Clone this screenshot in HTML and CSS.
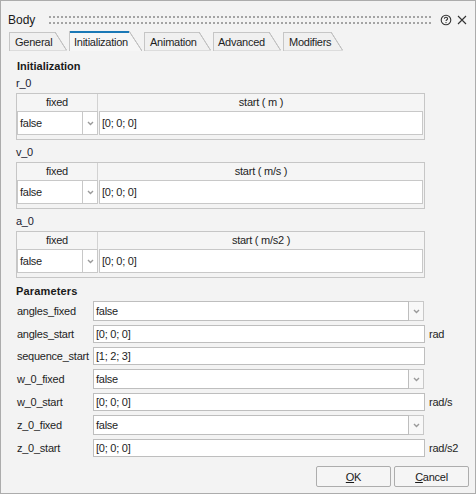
FILE: index.html
```html
<!DOCTYPE html>
<html>
<head>
<meta charset="utf-8">
<link rel="stylesheet" href="styles.css">
</head>
<body>
<div class="window">
  <header class="titlebar">
    <span class="title">Body</span>
    <span class="grip"></span>
    <svg class="help" width="12" height="12" viewBox="0 0 12 12"><circle cx="6" cy="6" r="4.8" fill="none" stroke="#333" stroke-width="1.1"/><path d="M4.4 4.8C4.4 3.8 5.1 3.3 6 3.3C6.9 3.3 7.6 3.9 7.6 4.7C7.6 5.7 6 5.8 6 7.1" fill="none" stroke="#333" stroke-width="1.1"/><circle cx="6" cy="8.6" r="0.7" fill="#333"/></svg>
    <svg class="close" width="10" height="10" viewBox="0 0 10 10"><path d="M1 1L9 9M9 1L1 9" stroke="#333" stroke-width="1.1"/></svg>
  </header>
  <nav class="tabs">
    <span class="tab tab-general">General</span>
    <span class="tab tab-init active">Initialization</span>
    <span class="tab tab-anim">Animation</span>
    <span class="tab tab-adv">Advanced</span>
    <span class="tab tab-mod">Modifiers</span>
  </nav>
  <main class="content">
    <div class="heading">Initialization</div>

    <div class="var-label">r_0</div>
    <div class="vtable">
      <div class="vhead"><span class="vh-fixed">fixed</span><span class="vh-start">start ( m )</span></div>
      <div class="vrow">
        <span class="cell-bool">false</span>
        <span class="cell-arrow"><svg width="7" height="5" viewBox="0 0 7 5"><path d="M1 1L3.5 3.5L6 1" fill="none" stroke="#9a9a9a" stroke-width="1.4"/></svg></span>
        <span class="cell-value">[0; 0; 0]</span>
      </div>
    </div>

    <div class="var-label">v_0</div>
    <div class="vtable">
      <div class="vhead"><span class="vh-fixed">fixed</span><span class="vh-start">start ( m/s )</span></div>
      <div class="vrow">
        <span class="cell-bool">false</span>
        <span class="cell-arrow"><svg width="7" height="5" viewBox="0 0 7 5"><path d="M1 1L3.5 3.5L6 1" fill="none" stroke="#9a9a9a" stroke-width="1.4"/></svg></span>
        <span class="cell-value">[0; 0; 0]</span>
      </div>
    </div>

    <div class="var-label">a_0</div>
    <div class="vtable">
      <div class="vhead"><span class="vh-fixed">fixed</span><span class="vh-start">start ( m/s2 )</span></div>
      <div class="vrow">
        <span class="cell-bool">false</span>
        <span class="cell-arrow"><svg width="7" height="5" viewBox="0 0 7 5"><path d="M1 1L3.5 3.5L6 1" fill="none" stroke="#9a9a9a" stroke-width="1.4"/></svg></span>
        <span class="cell-value">[0; 0; 0]</span>
      </div>
    </div>

    <div class="heading heading-params">Parameters</div>
    <div class="params">
      <span class="plabel">angles_fixed</span>
      <div class="select"><span class="sel-box">false</span><span class="sel-arrow"><svg width="7" height="5" viewBox="0 0 7 5"><path d="M1 1L3.5 3.5L6 1" fill="none" stroke="#9a9a9a" stroke-width="1.4"/></svg></span></div>
      <span class="unit"></span>

      <span class="plabel">angles_start</span>
      <span class="input">[0; 0; 0]</span>
      <span class="unit">rad</span>

      <span class="plabel">sequence_start</span>
      <span class="input">[1; 2; 3]</span>
      <span class="unit"></span>

      <span class="plabel">w_0_fixed</span>
      <div class="select"><span class="sel-box">false</span><span class="sel-arrow"><svg width="7" height="5" viewBox="0 0 7 5"><path d="M1 1L3.5 3.5L6 1" fill="none" stroke="#9a9a9a" stroke-width="1.4"/></svg></span></div>
      <span class="unit"></span>

      <span class="plabel">w_0_start</span>
      <span class="input">[0; 0; 0]</span>
      <span class="unit">rad/s</span>

      <span class="plabel">z_0_fixed</span>
      <div class="select"><span class="sel-box">false</span><span class="sel-arrow"><svg width="7" height="5" viewBox="0 0 7 5"><path d="M1 1L3.5 3.5L6 1" fill="none" stroke="#9a9a9a" stroke-width="1.4"/></svg></span></div>
      <span class="unit"></span>

      <span class="plabel">z_0_start</span>
      <span class="input">[0; 0; 0]</span>
      <span class="unit">rad/s2</span>
    </div>

    <div class="buttons">
      <button class="btn"><u>O</u>K</button>
      <button class="btn"><u>C</u>ancel</button>
    </div>
  </main>
</div>
</body>
</html>
```
FILE: styles.css
```css
html, body {
  margin: 0;
  padding: 0;
}
body {
  width: 476px;
  height: 494px;
  background: #f3f3f3;
  font-family: "Liberation Sans", Arial, sans-serif;
  font-size: 11px;
  letter-spacing: -0.25px;
  color: #1e1e1e;
  overflow: hidden;
}
.window {
  box-sizing: border-box;
  width: 476px;
  height: 494px;
  border: 1px solid #acacac;
  background: #f3f3f3;
  overflow: hidden;
}

/* title bar */
.titlebar {
  box-sizing: border-box;
  height: 30px;
  padding: 7px 8px 0 7px;
  display: flex;
  align-items: center;
}
.title {
  font-size: 12px;
  letter-spacing: 0;
  color: #1a1a1a;
}
.grip {
  flex: 1;
  height: 8px;
  margin-left: 14px;
  background:
    linear-gradient(90deg, #a4a4a4 50%, transparent 50%) 0 0 / 4px 2px repeat-x,
    linear-gradient(90deg, #a4a4a4 50%, transparent 50%) 0 6px / 4px 2px repeat-x;
}
.help {
  margin-left: 9px;
  display: block;
}
.close {
  margin-left: 5px;
  display: block;
}

/* tabs */
.tabs {
  height: 20px;
  display: flex;
  align-items: flex-end;
  gap: 2px;
  padding-left: 8px;
}
.tab {
  box-sizing: border-box;
  height: 19px;
  padding: 1px 0 0 4px;
  line-height: 18px;
  border-left: 1px solid #c6c6c6;
  color: #1e1e1e;
  white-space: nowrap;
  background:
    linear-gradient(#c6c6c6, #c6c6c6) 0 0 / calc(100% - 12px) 1px no-repeat,
    linear-gradient(#dcdcdc, #dcdcdc) 0 100% / 100% 1px no-repeat,
    linear-gradient(to top right, #f0f0f0 calc(50% - 0.8px), #c2c2c2 calc(50% - 0.3px), #c2c2c2 calc(50% + 0.3px), transparent calc(50% + 0.8px)) 100% 0 / 12px 100% no-repeat,
    linear-gradient(#f0f0f0, #f0f0f0) 0 0 / calc(100% - 12px) 100% no-repeat;
}
.tab.active {
  height: 20px;
  padding-top: 2px;
  background:
    linear-gradient(#1a78b6, #1a78b6) 0 0 / calc(100% - 13px) 2px no-repeat,
    linear-gradient(to top right, #f6f6f6 calc(50% - 0.8px), #c2c2c2 calc(50% - 0.3px), #c2c2c2 calc(50% + 0.3px), transparent calc(50% + 0.8px)) 100% 0 / 13px 100% no-repeat,
    linear-gradient(#f6f6f6, #f6f6f6) 0 0 / calc(100% - 13px) 100% no-repeat;
}
.tab-general { width: 58px; padding-left: 5px; }
.tab-init { width: 73px; }
.tab-anim { width: 67px; padding-left: 5px; }
.tab-adv { width: 68px; }
.tab-mod { width: 60px; padding-left: 5px; }

/* content */
.content {
  padding: 7px 0 0 15px;
}
.heading {
  font-weight: bold;
  line-height: 16px;
  letter-spacing: 0;
  padding-left: 1px;
  color: #1a1a1a;
}
.heading-params {
  margin-top: 5px;
  margin-bottom: 2px;
  padding-left: 0;
  letter-spacing: 0.15px;
}
.var-label {
  line-height: 16px;
  margin: 4px 0 2px;
  color: #202030;
}
.heading + .var-label {
  margin-top: 1px;
}

.vtable {
  box-sizing: border-box;
  width: 409px;
  border: 1px solid #c6c6c6;
  background: #f3f3f3;
  padding-bottom: 4px;
}
.vhead {
  height: 17px;
  display: grid;
  grid-template-columns: 81px 1fr;
  line-height: 17px;
  text-align: center;
  background: #f5f5f5;
}
.vh-fixed {
  border-right: 1px solid #d2d2d2;
}
.vrow {
  display: grid;
  grid-template-columns: 66px 15px 1fr;
  height: 24px;
}
.vrow > span {
  box-sizing: border-box;
  height: 24px;
  border: 1px solid #c8c8c8;
  background: #fff;
  line-height: 22px;
}
.cell-bool {
  padding-left: 2px;
}
.cell-arrow {
  border-left: none !important;
  display: flex;
  align-items: center;
  justify-content: center;
}
.cell-value {
  margin: 0 1px 0 1px;
  padding-left: 2px;
}

/* parameters */
.params {
  display: grid;
  grid-template-columns: 77px 332px auto;
  row-gap: 4px;
  align-items: center;
}
.plabel {
  line-height: 16px;
  padding-left: 1px;
}
.select {
  display: flex;
  height: 20px;
  width: 331px;
}
.sel-box {
  box-sizing: border-box;
  width: 316px;
  height: 20px;
  border: 1px solid #bebebe;
  background: #fff;
  line-height: 18px;
  padding-left: 2px;
}
.sel-arrow {
  box-sizing: border-box;
  width: 15px;
  height: 20px;
  border: 1px solid #c8c8c8;
  border-left: none;
  background: #f8f8f8;
  display: flex;
  align-items: center;
  justify-content: center;
}
.input {
  box-sizing: border-box;
  width: 332px;
  height: 18px;
  border: 1px solid #bebebe;
  background: #fff;
  line-height: 16px;
  padding-left: 2px;
}
.unit {
  margin-left: 4px;
  line-height: 16px;
}

/* buttons */
.buttons {
  display: flex;
  justify-content: flex-end;
  gap: 3px;
  margin-top: 9px;
  padding-right: 6px;
}
.btn {
  box-sizing: border-box;
  width: 75px;
  height: 21px;
  border: 1px solid #adadad;
  border-radius: 2px;
  background: #f5f5f5;
  font-family: "Liberation Sans", Arial, sans-serif;
  font-size: 11px;
  letter-spacing: -0.25px;
  color: #1a1a1a;
  padding: 0;
}
```
